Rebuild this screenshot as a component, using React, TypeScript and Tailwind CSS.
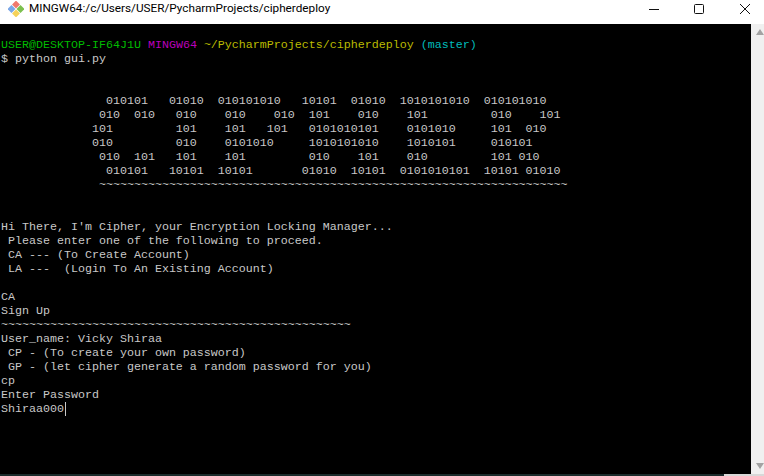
const PROMPT_FONT = "font-['Liberation_Mono','DejaVu_Sans_Mono',monospace]";

const banner = [
  '               010101   01010  010101010   10101  01010  1010101010  010101010',
  '              010  010   010    010    010  101    010    101         010    101',
  '             101         101    101   101   0101010101    0101010     101  010',
  '             010         010    0101010     1010101010    1010101     010101',
  '              010  101   101    101         010    101    010         101 010',
  '               010101   10101  10101       01010  10101  0101010101  10101 01010',
  '              ' + '~'.repeat(67),
];

const body = [
  "Hi There, I'm Cipher, your Encryption Locking Manager...",
  ' Please enter one of the following to proceed.',
  ' CA --- (To Create Account)',
  ' LA ---  (Login To An Existing Account)',
  '',
  'CA',
  'Sign Up',
  '~'.repeat(50),
  'User_name: Vicky Shiraa',
  ' CP - (To create your own password)',
  ' GP - (let cipher generate a random password for you)',
  'cp',
  'Enter Password',
];

function GitIcon() {
  return (
    <svg width="16" height="16" viewBox="0 0 16 16" className="shrink-0">
      <rect x="5.2" y="0.7" width="5.6" height="5.6" transform="rotate(45 8 3.5)" fill="#f0786c" />
      <rect x="0.7" y="5.2" width="5.6" height="5.6" transform="rotate(45 3.5 8)" fill="#7aa7e8" />
      <rect x="9.7" y="5.2" width="5.6" height="5.6" transform="rotate(45 12.5 8)" fill="#7cc04f" />
      <rect x="5.2" y="9.7" width="5.6" height="5.6" transform="rotate(45 8 12.5)" fill="#f5d25a" />
    </svg>
  );
}

function TitleBar() {
  return (
    <div className="flex h-6 items-center bg-white pb-[7px] pl-2">
      <GitIcon />
      <span className="ml-[5px] font-['Roboto',sans-serif] text-[11.75px] text-black">
        MINGW64:/c/Users/USER/PycharmProjects/cipherdeploy
      </span>
      <div className="ml-auto flex items-center">
        <svg width="10" height="10" viewBox="0 0 10 10" className="mr-[35px]">
          <path d="M0 5.5H10" stroke="#111" strokeWidth="1" />
        </svg>
        <svg width="10" height="10" viewBox="0 0 10 10" className="mr-[36px]">
          <rect x="0.5" y="0.5" width="9" height="9" rx="1" fill="none" stroke="#111" />
        </svg>
        <svg width="10" height="10" viewBox="0 0 10 10" className="mr-[14px]">
          <path d="M0 0L10 10M10 0L0 10" stroke="#111" strokeWidth="1" />
        </svg>
      </div>
    </div>
  );
}

function Scrollbar() {
  return (
    <div className="flex w-[13px] flex-col justify-between bg-[#f0f0f0] pt-[5px] pb-[5px] pl-[5px]">
      <div className="h-0 w-0 border-x-[4px] border-b-[6px] border-x-transparent border-b-[#a3a3a3]" />
      <div className="h-0 w-0 border-x-[4px] border-t-[6px] border-x-transparent border-t-[#a3a3a3]" />
    </div>
  );
}

export default function App() {
  return (
    <div className="flex h-[476px] w-[764px] flex-col overflow-hidden bg-white">
      <TitleBar />
      <div className="flex min-h-0 flex-1">
        <div
          className={`${PROMPT_FONT} flex-1 whitespace-pre bg-black pl-px text-[11.67px] leading-[14px] text-[#c8c8c8]`}
        >
          <div>&nbsp;</div>
          <div>
            <span className="text-[#00bb00]">USER@DESKTOP-IF64J1U</span>{' '}
            <span className="text-[#bb00bb]">MINGW64</span>{' '}
            <span className="text-[#bbbb00]">~/PycharmProjects/cipherdeploy</span>{' '}
            <span className="text-[#00bbbb]">(master)</span>
          </div>
          <div>$ python gui.py</div>
          <div>&nbsp;</div>
          <div>&nbsp;</div>
          {banner.map((line, i) => (
            <div key={i}>{line}</div>
          ))}
          <div>&nbsp;</div>
          <div>&nbsp;</div>
          {body.map((line, i) => (
            <div key={i}>{line || '\u00a0'}</div>
          ))}
          <div className="flex items-center">
            Shiraa000
            <span className="ml-px h-[14px] w-px bg-[#c8c8c8]" />
          </div>
        </div>
        <Scrollbar />
      </div>
      {/* desktop showing under the window */}
      <div className="flex h-0.5 shrink-0">
        <div className="w-[724px] bg-[#1a2b2b]" />
        <div className="flex-1 bg-[#d8d8d8]" />
      </div>
    </div>
  );
}
